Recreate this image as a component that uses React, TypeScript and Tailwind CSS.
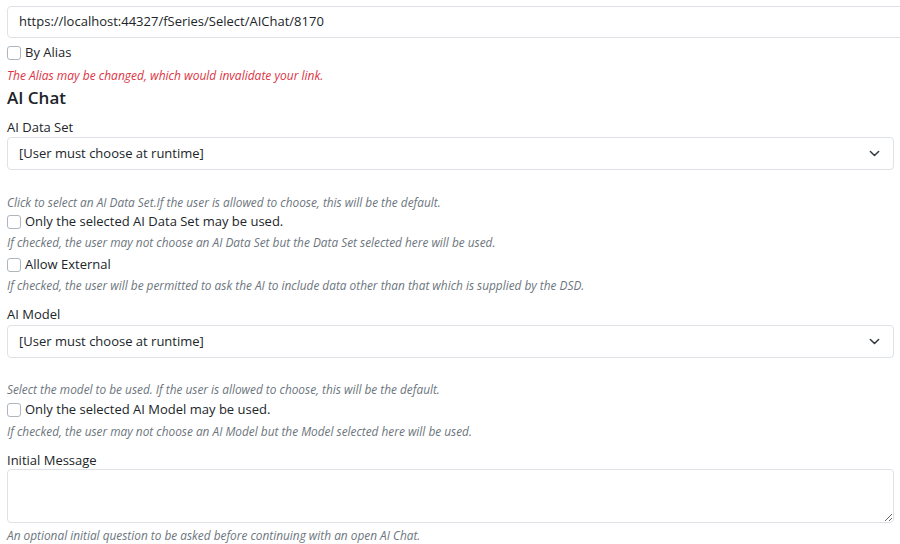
const font = { fontFamily: '"Open Sans", "Noto Sans", sans-serif' };

function Check({ label }: { label: string }) {
  return (
    <label className="flex items-center h-[20px] text-[13px] text-[#212529]">
      <span className="w-[14px] h-[14px] rounded-[3px] border border-[#adb5bd] bg-white mr-[4px] shrink-0" />
      {label}
    </label>
  );
}

function Help({ children }: { children: string }) {
  return <div className="text-[11.85px] italic text-[#6c757d] h-[18px] leading-[18px]">{children}</div>;
}

function Select({ value }: { value: string }) {
  return (
    <div className="h-[33px] w-[887px] border border-[#dee2e6] rounded-[4px] bg-white flex items-center justify-between pl-[11px] pr-[13px] text-[13px] text-[#212529]">
      <span>{value}</span>
      <svg width="11" height="11" viewBox="0 0 16 16">
        <path d="M2 5l6 6 6-6" fill="none" stroke="#343a40" strokeWidth="2.2" strokeLinecap="round" strokeLinejoin="round" />
      </svg>
    </div>
  );
}

export default function App() {
  return (
    <div className="w-[900px] h-[544px] overflow-hidden bg-white pl-[7px] pt-[6px]" style={font}>
      <div className="h-[32px] w-[900px] border border-[#dee2e6] rounded-[4px] flex items-center pl-[11px] text-[13px] text-[#212529]">
        https://localhost:44327/fSeries/Select/AIChat/8170
      </div>
      <div className="mt-[5px]"><Check label="By Alias" /></div>
      <div className="mt-[4px] text-[12px] italic text-[#dc3545] h-[18px] leading-[18px]">The Alias may be changed, which would invalidate your link.</div>
      <h2 className="mt-[2px] text-[17px] font-semibold text-[#212529] leading-[22px]">AI Chat</h2>
      <div className="mt-[9px] text-[13px] text-[#212529] leading-[18px]">AI Data Set</div>
      <div className="mt-[1px]"><Select value="[User must choose at runtime]" /></div>
      <div className="mt-[23px]"><Help>Click to select an AI Data Set.If the user is allowed to choose, this will be the default.</Help></div>
      <div className="mt-[1px]"><Check label="Only the selected AI Data Set may be used." /></div>
      <div className="mt-[1px]"><Help>If checked, the user may not choose an AI Data Set but the Data Set selected here will be used.</Help></div>
      <div className="mt-[4px]"><Check label="Allow External" /></div>
      <div className="mt-[1px]"><Help>If checked, the user will be permitted to ask the AI to include data other than that which is supplied by the DSD.</Help></div>
      <div className="mt-[11px] text-[13px] text-[#212529] leading-[18px]">AI Model</div>
      <div className="mt-[2px]"><Select value="[User must choose at runtime]" /></div>
      <div className="mt-[22px]"><Help>Select the model to be used. If the user is allowed to choose, this will be the default.</Help></div>
      <div className="mt-[2px]"><Check label="Only the selected AI Model may be used." /></div>
      <div className="mt-[2px]"><Help>If checked, the user may not choose an AI Model but the Model selected here will be used.</Help></div>
      <div className="mt-[11px] text-[13px] text-[#212529] leading-[18px]">Initial Message</div>
      <textarea className="block w-[887px] h-[54px] border border-[#dee2e6] rounded-[4px] resize-y outline-none" />
      <div className="mt-[3px]"><Help>An optional initial question to be asked before continuing with an open AI Chat.</Help></div>
    </div>
  );
}
